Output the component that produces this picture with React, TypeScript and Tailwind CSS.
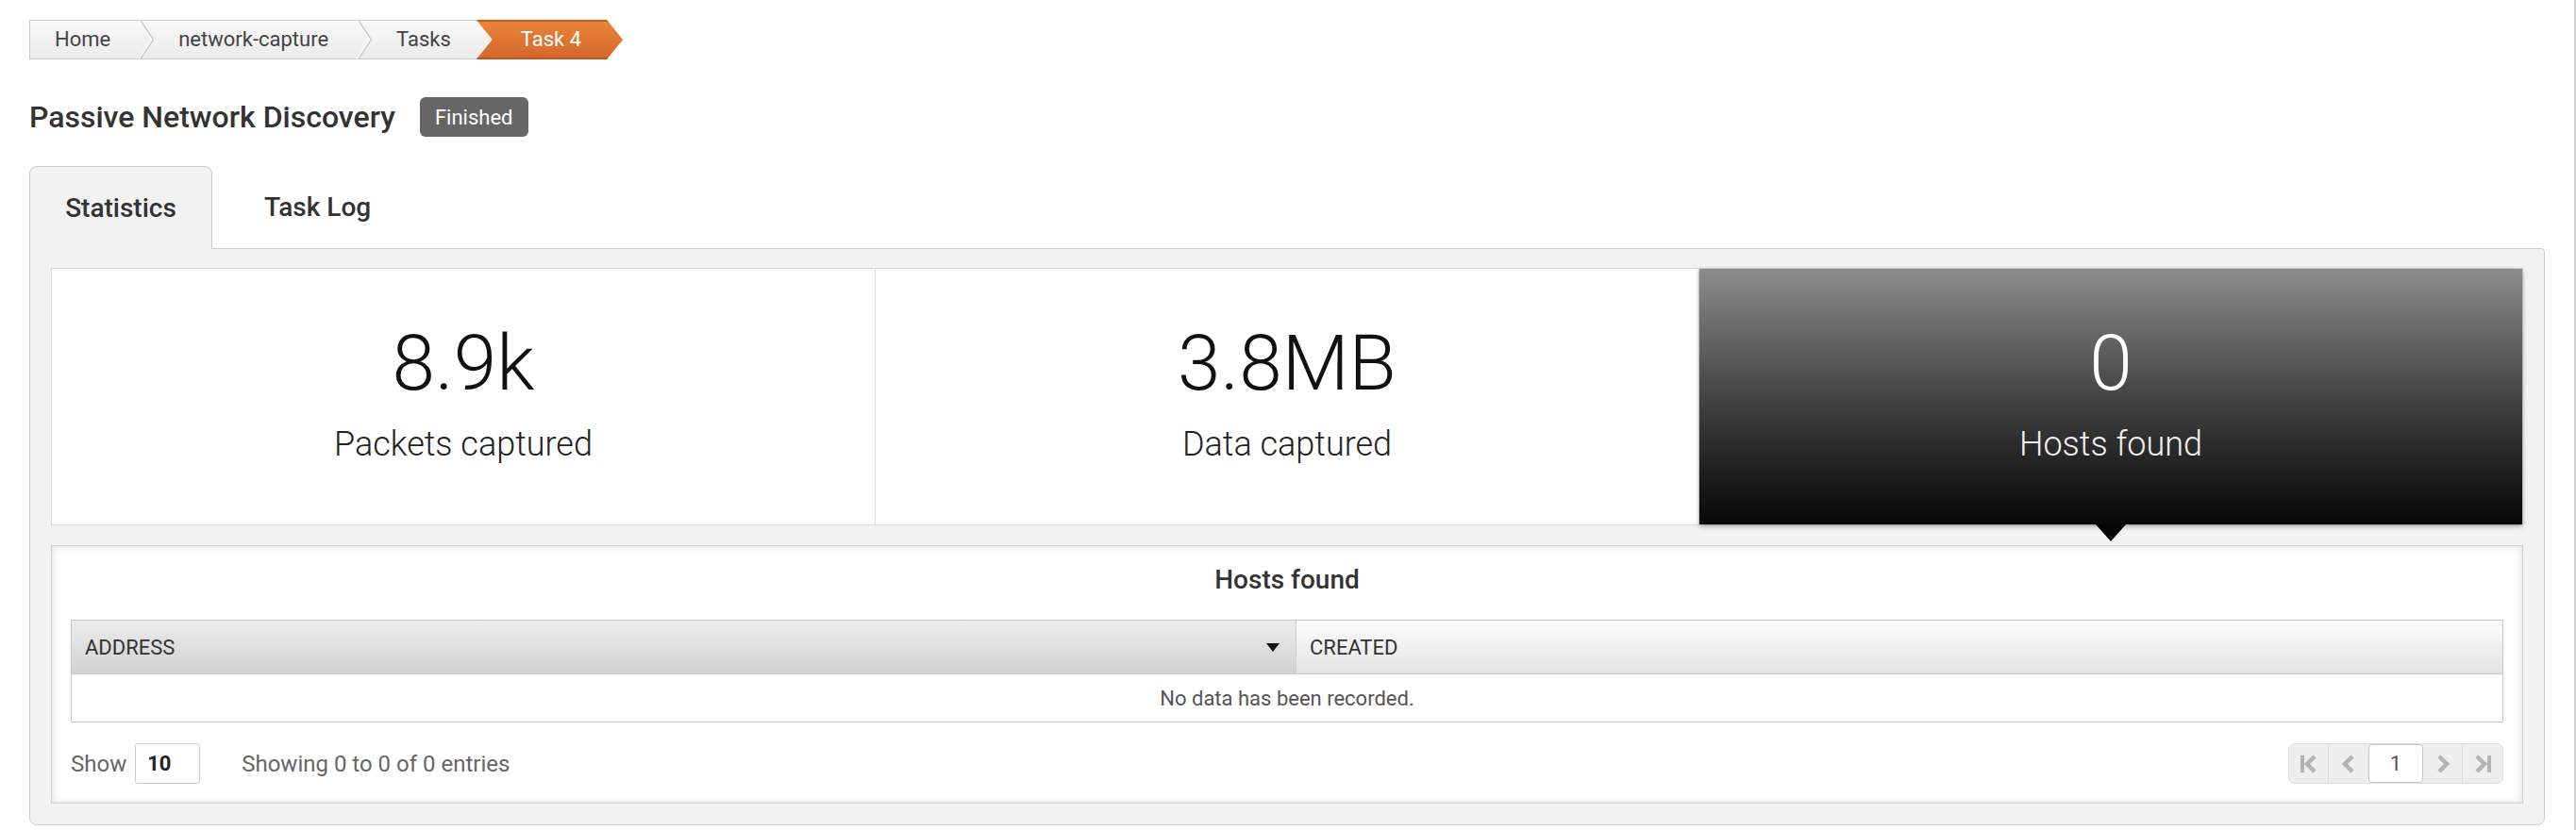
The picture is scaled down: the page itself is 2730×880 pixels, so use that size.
import React from 'react';

const Chevron = () => (
  <svg width="16" height="42" viewBox="0 0 16 42" className="shrink-0">
    <polyline points="0,0 14,21 0,42" fill="none" stroke="#ffffff" strokeWidth="1.5" />
    <polyline points="1.5,0 15.5,21 1.5,42" fill="none" stroke="#cbcbcb" strokeWidth="1.5" />
  </svg>
);

const PagerIcon = ({ dir, bar }: { dir: 'left' | 'right'; bar?: boolean }) => (
  <svg width="22" height="22" viewBox="0 0 22 22">
    {dir === 'left' ? (
      <>
        {bar && <rect x="2" y="2" width="4" height="18" fill="#b3b3b3" />}
        <polyline points={bar ? '17,3 9,11 17,19' : '15,3 7,11 15,19'} fill="none" stroke="#b3b3b3" strokeWidth="4.5" strokeLinejoin="miter" />
      </>
    ) : (
      <>
        <polyline points={bar ? '5,3 13,11 5,19' : '7,3 15,11 7,19'} fill="none" stroke="#b3b3b3" strokeWidth="4.5" strokeLinejoin="miter" />
        {bar && <rect x="16" y="2" width="4" height="18" fill="#b3b3b3" />}
      </>
    )}
  </svg>
);

const stats = [
  { value: '8.9k', label: 'Packets captured', active: false },
  { value: '3.8MB', label: 'Data captured', active: false },
  { value: '0', label: 'Hosts found', active: true },
];

export default function App() {
  return (
    <div className="min-h-screen bg-white border-r-2 border-[#cfcfcf] pl-[31px] pr-[31px] pt-[21px] font-[Roboto,sans-serif] text-[#333]">
      {/* Breadcrumb */}
      <div className="flex h-[42px] text-[22px] leading-none">
        <div className="flex items-center border border-[#c9c9c9] bg-gradient-to-b from-[#f8f8f8] to-[#ebebeb] text-[#444]">
          <span className="pl-[26px] pr-[30px]">Home</span>
          <Chevron />
          <span className="pl-[26px] pr-[30px]">network-capture</span>
          <Chevron />
          <span className="pl-[26px] pr-[43px]">Tasks</span>
        </div>
        <div className="relative z-10 -ml-[17px] flex items-center bg-gradient-to-b from-[#ea853a] to-[#d4662a] pl-[47px] pr-[44px] text-white shadow-[inset_0_2px_0_#c95e24,inset_0_-2px_0_#c25620] [clip-path:polygon(0_0,calc(100%_-_17px)_0,100%_50%,calc(100%_-_17px)_100%,0_100%,17px_50%)]">
          Task 4
        </div>
      </div>

      {/* Title */}
      <div className="mt-[40px] flex h-[42px] items-center gap-[26px]">
        <h1 className="text-[32px] font-medium leading-none text-[#333]">Passive Network Discovery</h1>
        <span className="flex h-[42px] items-center rounded-[6px] bg-[#666] px-[16px] text-[22px] text-white">Finished</span>
      </div>

      {/* Tabs */}
      <div className="mt-[31px] flex items-end">
        <div className="relative z-10 -mb-px flex h-[88px] w-[194px] items-center justify-center rounded-t-[8px] border border-b-0 border-[#cccccc] bg-[#f2f2f2] text-[28px] font-medium">
          Statistics
        </div>
        <div className="flex h-[87px] items-center pl-[55px] text-[28px] font-medium">Task Log</div>
      </div>

      <div className="rounded-b-[8px] rounded-tr-[4px] border border-[#cccccc] bg-[#f2f2f2] px-[22px] pt-[20px] pb-[22px]">
        {/* Stats */}
        <div className="flex h-[273px] border border-[#d9d9d9] bg-white">
          {stats.map((s, i) => (
            <div
              key={i}
              className={
                s.active
                  ? 'relative flex flex-1 flex-col items-center bg-gradient-to-b from-[#8d8d8d] to-[#080808] pt-[55px] text-white shadow-[0_2px_5px_rgba(0,0,0,0.35)]'
                  : 'flex flex-1 flex-col items-center border-r border-[#dddddd] pt-[55px] text-[#111]'
              }
            >
              <div className="text-[82px] font-light leading-[90px]">{s.value}</div>
              <div className={`mt-[21px] text-[36px] font-light leading-[40px] ${s.active ? 'text-[#f2f2f2]' : 'text-[#222]'}`}>{s.label}</div>
              {s.active && (
                <div className="absolute left-1/2 top-full h-0 w-0 -translate-x-1/2 border-x-[16px] border-t-[18px] border-x-transparent border-t-[#050505]" />
              )}
            </div>
          ))}
        </div>

        {/* Hosts table */}
        <div className="mt-[21px] border border-[#cfcfcf] bg-white px-[20px] pb-[20px] shadow-[inset_0_0_10px_rgba(0,0,0,0.14)]">
          <div className="flex h-[78px] items-center justify-center pb-[6px] text-[28px] font-medium text-[#333]">Hosts found</div>
          <div className="border border-[#c8c8c8]">
            <div className="flex h-[57px] border-b border-[#c8c8c8] text-[22px] text-[#333]">
              <div className="flex w-[1298px] items-center border-r border-[#d0d0d0] bg-gradient-to-b from-[#ececec] to-[#d2d2d2] pl-[14px] pr-[17px]">
                <span>ADDRESS</span>
                <span className="ml-auto h-0 w-0 border-x-[7px] border-t-[9px] border-x-transparent border-t-[#111]" />
              </div>
              <div className="flex flex-1 items-center bg-gradient-to-b from-[#fdfdfd] to-[#e3e3e3] pl-[14px]">CREATED</div>
            </div>
            <div className="flex h-[50px] items-center justify-center text-[22px] text-[#555]">No data has been recorded.</div>
          </div>

          <div className="mt-[22px] flex h-[43px] items-center text-[24px] text-[#666]">
            <span>Show</span>
            <div className="ml-[9px] flex h-[43px] w-[69px] items-center rounded-[3px] border border-[#cccccc] pl-[12px] text-[22px] font-bold text-[#222]">10</div>
            <span className="ml-[44px]">Showing 0 to 0 of 0 entries</span>
            <div className="ml-auto flex h-[43px] items-stretch rounded-[7px] border border-[#dedede] bg-[#eeeeee]">
              <div className="flex w-[42px] items-center justify-center border-r border-[#dddddd]">
                <PagerIcon dir="left" bar />
              </div>
              <div className="flex w-[42px] items-center justify-center">
                <PagerIcon dir="left" />
              </div>
              <div className="flex w-[58px] items-center justify-center rounded-[4px] border border-[#c6c6c6] bg-white text-[22px] text-[#555]">1</div>
              <div className="flex w-[42px] items-center justify-center border-r border-[#dddddd]">
                <PagerIcon dir="right" />
              </div>
              <div className="flex w-[42px] items-center justify-center">
                <PagerIcon dir="right" bar />
              </div>
            </div>
          </div>
        </div>
      </div>
    </div>
  );
}
